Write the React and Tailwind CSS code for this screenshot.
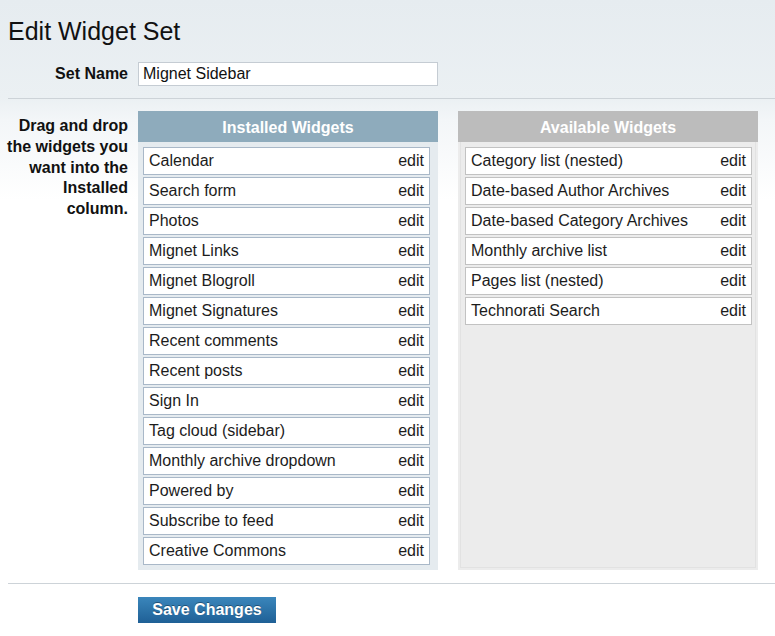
const installed = [
  'Calendar',
  'Search form',
  'Photos',
  'Mignet Links',
  'Mignet Blogroll',
  'Mignet Signatures',
  'Recent comments',
  'Recent posts',
  'Sign In',
  'Tag cloud (sidebar)',
  'Monthly archive dropdown',
  'Powered by',
  'Subscribe to feed',
  'Creative Commons',
]

const available = [
  'Category list (nested)',
  'Date-based Author Archives',
  'Date-based Category Archives',
  'Monthly archive list',
  'Pages list (nested)',
  'Technorati Search',
]

function Row({ name, border }) {
  return (
    <div className={`flex items-center justify-between h-[28px] bg-white border ${border} pl-[5px] pr-[5px] text-[16px] leading-[26px] text-[#1c1c1c]`}>
      <span>{name}</span>
      <span>edit</span>
    </div>
  )
}

export default function App() {
  return (
    <div
      className="min-h-[636px] bg-[linear-gradient(to_bottom,#e6ecf0_0px,#ebf0f3_98px,#f3f6f8_120px,#ffffff_200px)]"
      style={{ fontFamily: '"Liberation Sans", Arial, sans-serif' }}
    >
      <h1 className="pl-2 pt-[17px] text-[25px] leading-[28px] text-[#111]">Edit Widget Set</h1>

      <div className="flex items-center mt-[17px]">
        <label className="w-[128px] text-right font-bold text-[16px] text-[#111]">Set Name</label>
        <input
          defaultValue="Mignet Sidebar"
          className="ml-[10px] w-[300px] h-[24px] bg-white border border-[#c5ccd3] px-[4px] text-[16px] text-[#111] outline-none"
        />
      </div>

      <div className="ml-2 mt-[12px] h-px bg-[#cdd3d8]" />

      <div className="flex mt-[12px]">
        <p className="w-[128px] pt-[5px] text-right font-bold text-[16px] leading-[20.75px] text-[#111]">
          Drag and drop the widgets you want into the Installed column.
        </p>

        <div className="ml-[10px] w-[300px] bg-[#e5ebef] pb-[5px]">
          <div className="h-[31px] pt-[3px] bg-[#8eabbc] text-center text-white font-bold text-[16px] leading-[28px]">
            Installed Widgets
          </div>
          <div className="flex flex-col gap-[2px] pt-[5px] pl-[5px] pr-[8px]">
            {installed.map(n => (
              <Row key={n} name={n} border="border-[#a9b8c8]" />
            ))}
          </div>
        </div>

        <div className="ml-[20px] w-[300px] bg-[#ececec] flex flex-col">
          <div className="h-[31px] pt-[3px] bg-[#bcbcbc] text-center text-white font-bold text-[16px] leading-[28px]">
            Available Widgets
          </div>
          <div className="flex-1 mx-[2px] mb-[2px] border-x border-b border-[#e2e2e2] flex flex-col gap-[2px] pt-[5px] pl-[4px] pr-[3px]">
            {available.map(n => (
              <Row key={n} name={n} border="border-[#c2c2c2]" />
            ))}
          </div>
        </div>
      </div>

      <div className="ml-2 mt-[13px] h-px bg-[#cdd3d8]" />

      <div className="pl-[138px] pt-[13px]">
        <button className="w-[138px] h-[26px] bg-[linear-gradient(to_bottom,#3a86bb,#1f6096)] text-white font-bold text-[16px] leading-[26px] [text-shadow:0_-1px_0_rgba(0,0,0,0.35)]">
          Save Changes
        </button>
      </div>
    </div>
  )
}
